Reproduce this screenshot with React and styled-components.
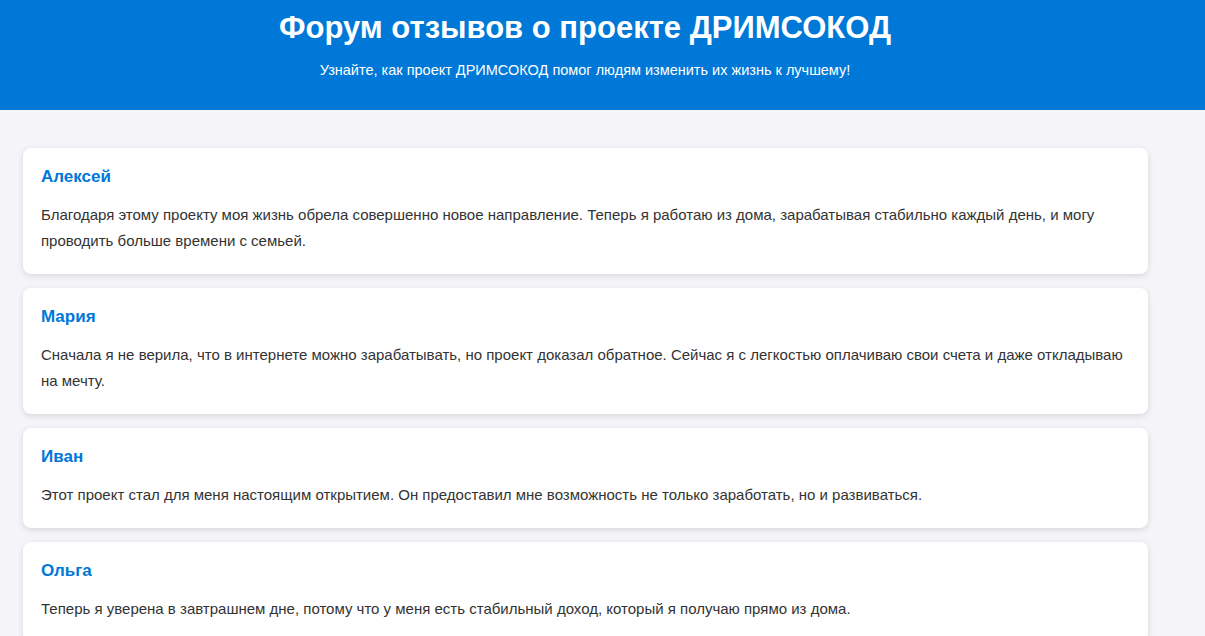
import React from "react";
import styled, { createGlobalStyle } from "styled-components";

const Global = createGlobalStyle`
  body { margin: 0; background: #f4f4f9; font-family: "Liberation Sans", Arial, sans-serif; }
`;
const Header = styled.header`
  background: #0078d7; color: #fff; height: 110px; box-sizing: border-box;
  padding-right: 35px; padding-top: 10px; text-align: center;
`;
const Title = styled.h1`margin: 0; font-size: 31px; line-height: 36px; font-weight: bold;`;
const Sub = styled.p`margin: 15px 0 0; font-size: 14.5px; line-height: 18px;`;
const List = styled.main`
  width: 1125px; margin: 38px 0 0 23px; display: flex; flex-direction: column; gap: 14px;
`;
const Card = styled.section`
  background: #fff; border-radius: 8px; padding: 19px 18px 20px;
  box-shadow: 0 2px 6px rgba(0,0,0,0.12);
`;
const Name = styled.h3`margin: 0; color: #0078d7; font-size: 17px; line-height: 20px; font-weight: bold;`;
const Text = styled.p`margin: 15px 0 0; color: #333; font-size: 15px; line-height: 26px;`;

const data = [
  ["Алексей", "Благодаря этому проекту моя жизнь обрела совершенно новое направление. Теперь я работаю из дома, зарабатывая стабильно каждый день, и могу проводить больше времени с семьей."],
  ["Мария", "Сначала я не верила, что в интернете можно зарабатывать, но проект доказал обратное. Сейчас я с легкостью оплачиваю свои счета и даже откладываю на мечту."],
  ["Иван", "Этот проект стал для меня настоящим открытием. Он предоставил мне возможность не только заработать, но и развиваться."],
  ["Ольга", "Теперь я уверена в завтрашнем дне, потому что у меня есть стабильный доход, который я получаю прямо из дома."],
];

export default function App() {
  return (
    <>
      <Global />
      <Header>
        <Title>Форум отзывов о проекте ДРИМСОКОД</Title>
        <Sub>Узнайте, как проект ДРИМСОКОД помог людям изменить их жизнь к лучшему!</Sub>
      </Header>
      <List>
        {data.map(([n, t]) => (
          <Card key={n}><Name>{n}</Name><Text>{t}</Text></Card>
        ))}
      </List>
    </>
  );
}
